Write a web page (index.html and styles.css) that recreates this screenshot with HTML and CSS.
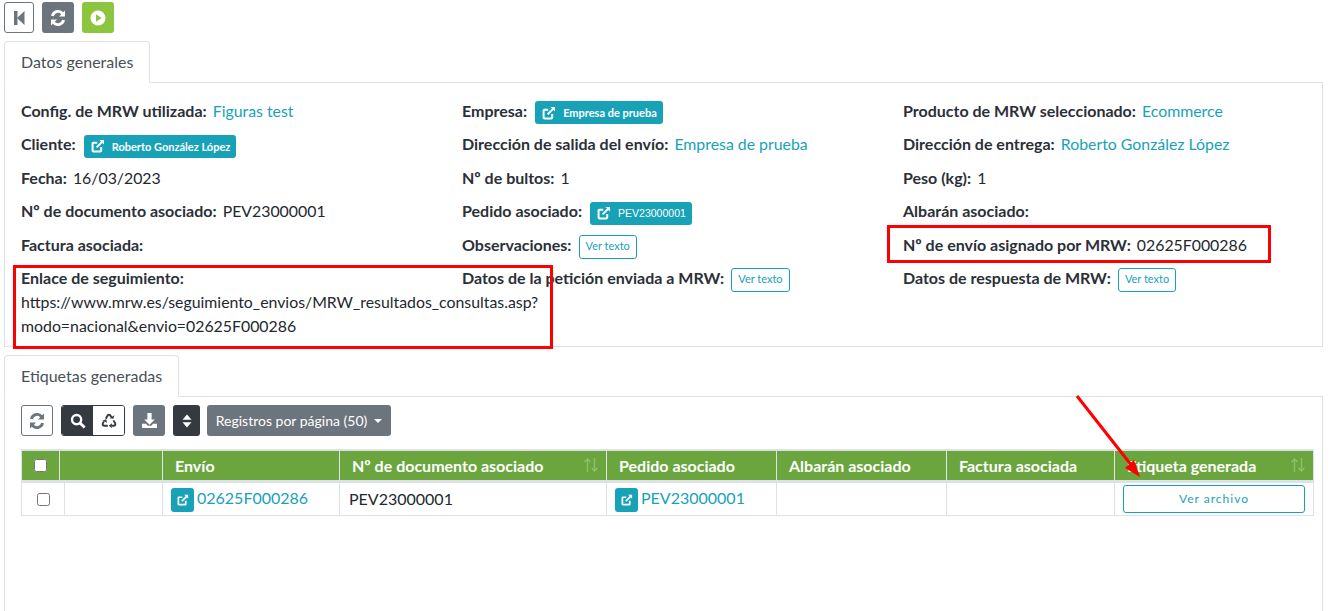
FILE: index.html
```html
<!DOCTYPE html>
<html lang="es">
<head>
    <meta charset="UTF-8">
    <title>Datos generales</title>
    <link rel="stylesheet" href="styles.css">
</head>
<body>
    <div class="toolbar">
        <button class="btn btn-outline-dark btn-square">
            <svg width="14" height="14" viewBox="0 0 14 14"><path fill="#6c757d" d="M2 0h3.500v14H2z"/><path fill="#6c757d" d="M12.500 0v14L5 7z"/></svg>
        </button>
        <button class="btn btn-gray btn-square">
            <svg width="16" height="16" viewBox="0 0 16 16"><use href="#sync"/></svg>
        </button>
        <button class="btn btn-green btn-square">
            <svg width="16" height="16" viewBox="0 0 16 16"><circle cx="8" cy="8" r="7.500" fill="#fff"/><path fill="#8cc63f" d="M6 4.200 11.600 8 6 11.800z"/></svg>
        </button>
    </div>

    <svg class="defs" width="0" height="0">
        <symbol id="sync" viewBox="0 0 16 16">
            <path fill="currentColor" d="M13.200 2.200 15 .4v6H9l2.200-2.200A4.400 4.400 0 0 0 3.800 6.200L1 5.700A7.200 7.200 0 0 1 13.200 2.200z"/>
            <path fill="currentColor" d="M2.800 13.800 1 15.600v-6h6l-2.200 2.200A4.400 4.400 0 0 0 12.200 9.800l2.800.5A7.200 7.200 0 0 1 2.800 13.800z"/>
        </symbol>
        <symbol id="ext" viewBox="0 0 14 14">
            <path fill="none" stroke="currentColor" stroke-width="2" d="M10.200 8v3.600a.8.8 0 0 1-.8.8H2.400a.8.8 0 0 1-.8-.8V4.600a.8.8 0 0 1 .8-.8h3.800"/>
            <path fill="none" stroke="currentColor" stroke-width="2" d="M5.600 8.400 11.600 2.400"/>
            <path fill="currentColor" d="M8.400 1h4.600v4.600z"/>
        </symbol>
        <symbol id="sort" viewBox="0 0 14 14">
            <path fill="none" stroke="currentColor" stroke-width="1.400" d="M3.500 14V1M.6 4 3.500 1l2.900 3M10.500 0v13M7.600 10l2.900 3 2.900-3"/>
        </symbol>
    </svg>

    <ul class="tabs"><li class="tab">Datos generales</li></ul>
    <section class="panel panel-info">
        <div class="info-grid">
            <div class="field"><b>Config. de MRW utilizada:</b> <a>Figuras test</a></div>
            <div class="field"><b>Empresa:</b> <span class="badge"><svg width="14" height="14"><use href="#ext"/></svg>Empresa de prueba</span></div>
            <div class="field"><b>Producto de MRW seleccionado:</b> <a>Ecommerce</a></div>

            <div class="field"><b>Cliente:</b> <span class="badge"><svg width="14" height="14"><use href="#ext"/></svg>Roberto González López</span></div>
            <div class="field"><b>Dirección de salida del envío:</b> <a>Empresa de prueba</a></div>
            <div class="field"><b>Dirección de entrega:</b> <a>Roberto González López</a></div>

            <div class="field"><b>Fecha:</b> 16/03/2023</div>
            <div class="field"><b>Nº de bultos:</b> 1</div>
            <div class="field"><b>Peso (kg):</b> 1</div>

            <div class="field"><b>Nº de documento asociado:</b> PEV23000001</div>
            <div class="field"><b>Pedido asociado:</b> <span class="badge badge-code"><svg width="14" height="14"><use href="#ext"/></svg>PEV23000001</span></div>
            <div class="field"><b>Albarán asociado:</b></div>

            <div class="field"><b>Factura asociada:</b></div>
            <div class="field"><b>Observaciones:</b> <span class="btn-text">Ver texto</span></div>
            <div class="field"><b>Nº de envío asignado por MRW:</b> 02625F000286</div>

            <div class="field"><b>Enlace de seguimiento:</b><br>https://www.mrw.es/seguimiento_envios/MRW_resultados_consultas.asp?<br>modo=nacional&amp;envio=02625F000286</div>
            <div class="field"><b>Datos de la petición enviada a MRW:</b> <span class="btn-text">Ver texto</span></div>
            <div class="field"><b>Datos de respuesta de MRW:</b> <span class="btn-text">Ver texto</span></div>
        </div>
    </section>

    <ul class="tabs tabs-second"><li class="tab">Etiquetas generadas</li></ul>
    <section class="panel panel-labels">
        <div class="table-tools">
            <button class="btn btn-outline-dark btn-tool">
                <svg width="16" height="16" viewBox="0 0 16 16" class="ic-gray"><use href="#sync"/></svg>
            </button>
            <div class="btn-group">
                <button class="btn btn-dark btn-tool">
                    <svg width="16" height="16" viewBox="0 0 16 16"><circle cx="6.600" cy="6.600" r="4.600" fill="none" stroke="#fff" stroke-width="2.400"/><path stroke="#fff" stroke-width="2.800" d="m10 10 4.600 4.600"/></svg>
                </button>
                <button class="btn btn-white btn-tool">
                    <svg width="16" height="16" viewBox="0 0 16 16"><g fill="none" stroke="#343a40" stroke-width="1.900"><path d="M4.800 5.800 6.800 2.200q1.200-1 2.400 0l1.200 2"/><path d="M12.500 7.400l1.700 3q.5 1.800-1.200 2.300h-2.400"/><path d="M6.800 12.700H3q-1.700-.5-1.200-2.300l1.100-2"/></g><path fill="#343a40" d="m8.600 5.200 3.800.6.900-3.600zM10.800 10.300v4.700l-3-2.300zM1.600 7.500l3.600-1.200.8 3.400z"/></svg>
                </button>
            </div>
            <button class="btn btn-gray btn-tool">
                <svg width="17" height="17" viewBox="0 0 16 16"><path fill="#fff" d="M6 1h4v6h3l-5 5-5-5h3z"/><path fill="#fff" d="M1 11h3.500l2 2h3l2-2H15v4H1z"/></svg>
            </button>
            <button class="btn btn-dark btn-sort">
                <svg width="10" height="16" viewBox="0 0 10 16"><path fill="#fff" d="M5 1.500 9.500 6.800h-9zM5 14.500.5 9.200h9z"/></svg>
            </button>
            <button class="btn btn-gray btn-pages">Registros por página (50)<span class="caret"></span></button>
        </div>

        <table class="grid grid-head">
            <colgroup>
                <col class="c-check-h"><col class="c-act-h"><col class="c-envio"><col class="c-doc"><col class="c-ped"><col class="c-alb"><col class="c-fac"><col>
            </colgroup>
            <tr>
                <th class="cell-check"><input type="checkbox"></th>
                <th></th>
                <th>Envío</th>
                <th class="sortable">Nº de documento asociado<svg class="sort-ic" width="14" height="14"><use href="#sort"/></svg></th>
                <th>Pedido asociado</th>
                <th>Albarán asociado</th>
                <th>Factura asociada</th>
                <th class="sortable">Etiqueta generada<svg class="sort-ic" width="14" height="14"><use href="#sort"/></svg></th>
            </tr>
        </table>
        <table class="grid grid-body">
            <colgroup>
                <col class="c-check"><col class="c-act"><col class="c-envio"><col class="c-doc"><col class="c-ped"><col class="c-alb"><col class="c-fac"><col>
            </colgroup>
            <tr>
                <td class="cell-check"><input type="checkbox"></td>
                <td></td>
                <td class="cell-link"><span class="ext-btn"><svg width="12" height="12"><use href="#ext"/></svg></span><a>02625F000286</a></td>
                <td>PEV23000001</td>
                <td class="cell-link"><span class="ext-btn"><svg width="12" height="12"><use href="#ext"/></svg></span><a>PEV23000001</a></td>
                <td></td>
                <td></td>
                <td class="cell-file"><span class="btn-file">Ver archivo</span></td>
            </tr>
        </table>
    </section>

    <!-- anotaciones en rojo sobre la captura -->
    <div class="mark mark-link"></div>
    <div class="mark mark-envio"></div>
    <svg class="arrow" width="80" height="90" viewBox="0 0 80 90">
        <path stroke="#f00" stroke-width="3" d="M3 2 58 72"/>
        <path fill="#f00" d="M66 83 51 74l9-8z"/>
    </svg>
</body>
</html>
```

FILE: styles.css
```css
* {
    box-sizing: border-box;
}
html, body {
    height: 611px;
    overflow: hidden;
}
body {
    position: relative;
    margin: 0;
    background: #fff;
    color: #23282f;
    font-family: Lato, sans-serif;
    font-size: 15.85px;
    line-height: 24px;
}
b {
    font-size: 16px;
    font-weight: 700;
    margin-right: 2px;
    color: #2b3038;
}
a {
    color: #17a2b8;
}
.defs {
    position: absolute;
}

/* botones */
.toolbar {
    display: flex;
    gap: 8px;
    padding: 2px 0 0 4px;
}
.btn {
    display: flex;
    align-items: center;
    justify-content: center;
    padding: 0;
    border: 1px solid transparent;
    border-radius: 3px;
    font-family: Lato, sans-serif;
    color: #fff;
}
.btn-square {
    width: 31px;
    height: 31px;
}
.toolbar .btn-outline-dark {
    width: 30px;
}
.toolbar .btn-gray {
    width: 32px;
}
.btn-outline-dark {
    background: #fff;
    border-color: #6c757d;
}
.btn-gray {
    background: #6c757d;
}
.btn-green {
    background: #8cc63f;
    width: 32px;
}
.btn-dark {
    background: #343a40;
}
.btn-white {
    background: #fff;
}

/* pestañas */
.tabs {
    display: flex;
    margin: 8px 0 0;
    padding: 0 0 0 4px;
    list-style: none;
}
.tabs-second {
    margin-top: 8px;
}
.tab {
    height: 42px;
    margin-bottom: -1px;
    padding: 8px 16px;
    position: relative;
    background: #fff;
    border: 1px solid #dee2e6;
    border-bottom-color: #fff;
    border-radius: 4px 4px 0 0;
    color: #495057;
    font-size: 16px;
}
.panel {
    margin-left: 4px;
    width: 1319px;
    border: 1px solid #dee2e6;
}
.panel-info {
    height: 265px;
    padding: 16px 16px 0;
}
.panel-labels {
    height: 230px;
    padding: 8px 8px 0 16px;
}

/* datos generales */
.info-grid {
    display: grid;
    grid-template-columns: repeat(3, 441px);
    grid-auto-rows: 33.4px;
}
.field {
    white-space: nowrap;
}
.badge {
    display: inline-flex;
    align-items: center;
    gap: 7px;
    height: 23px;
    margin-left: 2px;
    padding: 0 6px 0 7px;
    vertical-align: middle;
    background: #17a2b8;
    border-radius: 3px;
    color: #fff;
    font-size: 11px;
    font-weight: 700;
    line-height: 23px;
}
.badge svg {
    color: #fff;
}
.badge-code {
    font-family: "Liberation Sans", sans-serif;
    font-weight: 400;
    font-size: 10.500px;
}
.btn-text {
    display: inline-block;
    height: 24px;
    margin-left: 1px;
    padding: 0 6px;
    vertical-align: middle;
    border: 1px solid #17a2b8;
    border-radius: 3px;
    color: #17a2b8;
    font-size: 11px;
    line-height: 20px;
}

/* tabla de etiquetas */
.table-tools {
    display: flex;
    gap: 8px;
    height: 31px;
}
.btn-tool {
    width: 32px;
    height: 31px;
}
.ic-gray {
    color: #6c757d;
}
.btn-gray svg {
    color: #fff;
}
.btn-group {
    display: flex;
    border: 1px solid #343a40;
    border-radius: 3px;
    overflow: hidden;
}
.btn-group .btn {
    width: 31px;
    border: 0;
    border-radius: 0;
    height: 29px;
}
.btn-sort {
    width: 27px;
    height: 31px;
}
.btn-pages {
    width: 184px;
    height: 31px;
    margin-left: -1px;
    font-size: 14px;
}
.caret {
    margin-left: 7px;
    border-top: 4.500px solid #fff;
    border-left: 4.500px solid transparent;
    border-right: 4.500px solid transparent;
}
.grid {
    width: 1293px;
    table-layout: fixed;
    border-collapse: collapse;
}
.grid-head {
    margin-top: 13px;
}
.c-check-h { width: 38px; }
.c-act-h { width: 103px; }
.c-check { width: 43px; }
.c-act { width: 98px; }
.c-envio { width: 177px; }
.c-doc { width: 267px; }
.c-ped { width: 170px; }
.c-alb { width: 170px; }
.c-fac { width: 168px; }
.grid th {
    height: 31px;
    padding: 0 12px;
    position: relative;
    background: #6aa63d;
    border: 2px solid #dee2e6;
    border-width: 2px 1px;
    color: #fff;
    font-size: 16px;
    font-weight: 700;
    text-align: left;
    white-space: nowrap;
}
.grid th.cell-check {
    padding: 0;
    text-align: center;
}
.sort-ic {
    position: absolute;
    right: 8px;
    top: 7px;
    color: #8fbe6c;
}
.grid td {
    height: 33px;
    padding: 0 8px;
    border: 1px solid #dee2e6;
    font-size: 16px;
}
.grid td.cell-check {
    padding: 0 0 0 1px;
    text-align: center;
}
input[type="checkbox"] {
    display: block;
    width: 13px;
    height: 13px;
    margin: 0 auto;
}
.cell-link a {
    margin-left: 3px;
}
.ext-btn {
    display: inline-flex;
    align-items: center;
    justify-content: center;
    width: 23px;
    height: 24px;
    vertical-align: middle;
    background: #17a2b8;
    border-radius: 3px;
    color: #fff;
}
.grid td:first-child + td + td + td {
    padding-left: 9px;
}
.btn-file {
    display: block;
    height: 28px;
    border: 1px solid #17a2b8;
    border-radius: 3px;
    color: #17a2b8;
    font-size: 12px;
    letter-spacing: 1px;
    line-height: 26px;
    text-align: center;
}

/* anotaciones */
.mark {
    position: absolute;
    border: 3px solid #f00;
}
.mark-link {
    left: 13px;
    top: 265px;
    width: 540px;
    height: 84px;
}
.mark-envio {
    left: 887px;
    top: 225px;
    width: 384px;
    height: 38px;
}
.arrow {
    position: absolute;
    left: 1074px;
    top: 394px;
}
```
